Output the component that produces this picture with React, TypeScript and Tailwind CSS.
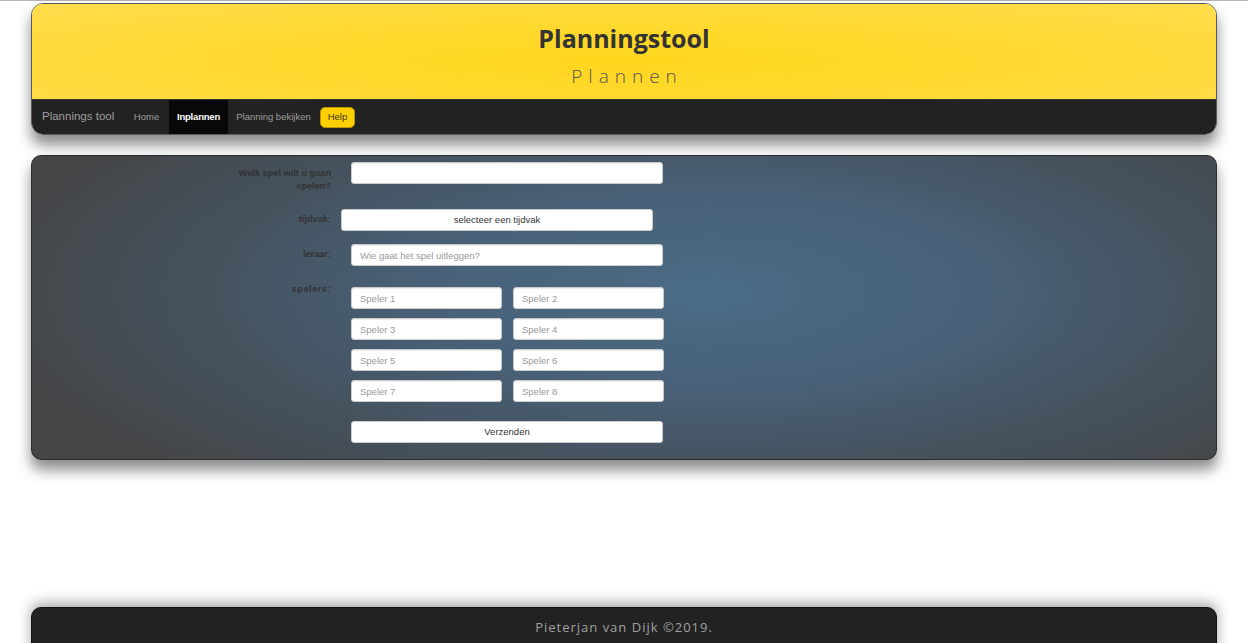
import React from "react";

const inputCls =
  "h-[22px] rounded-[3px] border border-[#ccc] bg-white px-[8px] text-[9.5px] text-[#555] placeholder:text-[#999] shadow-[inset_0_1px_1px_rgba(0,0,0,0.075)] outline-none";

export default function App() {
  return (
    <div className="min-h-[643px] bg-white" style={{ fontFamily: '"Liberation Sans", Arial, sans-serif' }}>
      <div className="h-[2px] border-t border-[#b5b5b5]" />
      {/* Header */}
      <div className="mx-[31px] mt-[1px] overflow-hidden rounded-[12px] border border-[#5a5a5a] shadow-[0_10px_14px_rgba(0,0,0,0.45)]">
        <div className="flex h-[95px] flex-col items-center bg-[radial-gradient(ellipse_at_50%_60%,#ffd51c_0%,#ffd92f_45%,#ffdd4d_100%)]">
          <h1
            className="mt-[18px] text-[25px] font-bold leading-[32px] text-[#333]"
            style={{ fontFamily: '"Open Sans", "Noto Sans", sans-serif' }}
          >
            Planningstool
          </h1>
          <div
            className="mt-[10px] pl-[6px] text-[19px] font-light leading-[24px] tracking-[6px] text-[#555]"
            style={{ fontFamily: '"Open Sans", "Noto Sans", sans-serif' }}
          >
            Plannen
          </div>
        </div>
        <nav className="flex h-[35px] items-center border-t border-[#333] bg-[#222] pl-[10px]">
          <span className="w-[82px] text-[11.5px] text-[#9d9d9d]">Plannings tool</span>
          <span className="flex h-full w-[45px] items-center justify-center text-[9.5px] text-[#9d9d9d]">Home</span>
          <span className="flex h-full w-[59px] items-center justify-center bg-[#080808] text-[9.5px] font-bold tracking-[-0.2px] text-white">
            Inplannen
          </span>
          <span className="flex h-full w-[91px] items-center justify-center text-[9.5px] text-[#9d9d9d]">
            Planning bekijken
          </span>
          <span className="ml-[1px] flex h-[21px] w-[35px] items-center justify-center rounded-[5px] border border-[#b89600] bg-[#ffd000] text-[9.5px] text-[#333]">
            Help
          </span>
        </nav>
      </div>

      {/* Form panel */}
      <div className="mx-[31px] mt-[20px] rounded-[10px] border border-[#2e2e2e] bg-[radial-gradient(ellipse_62%_85%_at_57%_45%,#4b6b84_0%,#48627a_35%,#45515c_70%,#444546_100%)] pb-[16px] pt-[6px] shadow-[0_10px_14px_rgba(0,0,0,0.45)]">
        {/* Row 1 */}
        <div className="flex h-[31px] items-start">
          <div className="flex w-[299px] justify-end">
            <label className="w-[94px] pt-[5px] text-right text-[9.2px] font-bold leading-[13px] text-[#333]">
              Welk spel wilt u gaan spelen?
            </label>
          </div>
          <input className={`ml-[20px] w-[312px] ${inputCls}`} />
        </div>
        {/* Row 2 */}
        <div className="mt-[16px] flex h-[22px] items-center">
          <label className="w-[299px] text-right text-[9.2px] font-bold text-[#333]">tijdvak:</label>
          <button className="ml-[10px] flex h-[22px] w-[312px] items-center justify-center rounded-[3px] border border-[#ccc] bg-white text-[9.5px] text-[#333]">
            selecteer een tijdvak
          </button>
        </div>
        {/* Row 3 */}
        <div className="mt-[13px] flex h-[22px] items-center">
          <label className="w-[299px] text-right text-[9.2px] font-bold text-[#333]">leraar:</label>
          <input className={`ml-[20px] w-[312px] ${inputCls}`} placeholder="Wie gaat het spel uitleggen?" />
        </div>
        {/* Row 4 */}
        <div className="mt-[21px] flex items-start">
          <label className="-mt-[4px] w-[299px] text-right text-[9.2px] font-bold leading-[13px] tracking-[0.5px] text-[#333]">
            spelers:
          </label>
          <div className="ml-[20px] grid grid-cols-[151px_151px] gap-x-[11px] gap-y-[9px]">
            {[1, 2, 3, 4, 5, 6, 7, 8].map((n) => (
              <input key={n} className={`w-[151px] ${inputCls}`} placeholder={`Speler ${n}`} />
            ))}
          </div>
        </div>
        {/* Submit */}
        <div className="mt-[19px] flex">
          <div className="w-[299px]" />
          <button className="ml-[20px] flex h-[22px] w-[312px] items-center justify-center rounded-[3px] border border-[#ccc] bg-white text-[9.5px] text-[#333]">
            Verzenden
          </button>
        </div>
      </div>

      {/* Footer */}
      <div className="mx-[31px] mt-[147px] flex h-[60px] justify-center rounded-t-[10px] border border-[#111] bg-[#222] pt-[9px] shadow-[0_-4px_14px_rgba(0,0,0,0.35)]">
        <span
          className="text-[13px] leading-[20px] tracking-[1px] text-[#a0a0a0]"
          style={{ fontFamily: '"Open Sans", "Noto Sans", sans-serif' }}
        >
          Pieterjan van Dijk ©2019.
        </span>
      </div>
    </div>
  );
}
